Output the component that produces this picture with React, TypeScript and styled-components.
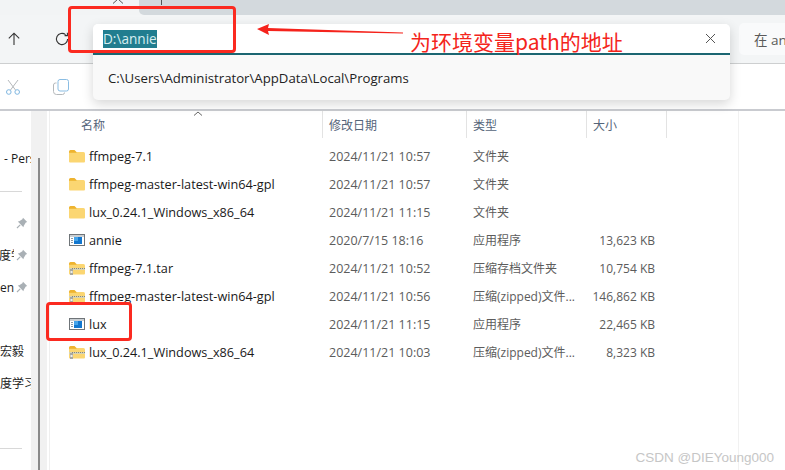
import React from 'react';
import styled, { createGlobalStyle } from 'styled-components';

const GlobalStyle = createGlobalStyle`
  html, body { margin: 0; padding: 0; background: #fff; }
  * { box-sizing: border-box; }
`;

const UI_FONT = `"Open Sans", "Noto Sans CJK SC", sans-serif`;

type FileKind = 'folder' | 'app' | 'zip';

interface FileEntry {
  name: string;
  date: string;
  type: string;
  size?: string;
  kind: FileKind;
}

const files: FileEntry[] = [
  { name: 'ffmpeg-7.1', date: '2024/11/21 10:57', type: '文件夹', kind: 'folder' },
  { name: 'ffmpeg-master-latest-win64-gpl', date: '2024/11/21 10:57', type: '文件夹', kind: 'folder' },
  { name: 'lux_0.24.1_Windows_x86_64', date: '2024/11/21 11:15', type: '文件夹', kind: 'folder' },
  { name: 'annie', date: '2020/7/15 18:16', type: '应用程序', size: '13,623 KB', kind: 'app' },
  { name: 'ffmpeg-7.1.tar', date: '2024/11/21 10:52', type: '压缩存档文件夹', size: '10,754 KB', kind: 'zip' },
  { name: 'ffmpeg-master-latest-win64-gpl', date: '2024/11/21 10:56', type: '压缩(zipped)文件...', size: '146,862 KB', kind: 'zip' },
  { name: 'lux', date: '2024/11/21 11:15', type: '应用程序', size: '22,465 KB', kind: 'app' },
  { name: 'lux_0.24.1_Windows_x86_64', date: '2024/11/21 10:03', type: '压缩(zipped)文件...', size: '8,323 KB', kind: 'zip' },
];

const FileIcon = ({ kind }: { kind: FileKind }) => {
  if (kind === 'app') {
    return (
      <svg width="16" height="14" viewBox="0 0 16 14">
        <rect x="0.5" y="1.5" width="15" height="11" fill="#fff" stroke="#6f7478" />
        <rect x="1" y="2" width="14" height="2" fill="#c9ced2" />
        <rect x="5" y="4" width="8" height="7" fill="#1277cf" />
        <rect x="5" y="4" width="4" height="4" fill="#45a4ea" />
        <rect x="2" y="5" width="2" height="1" fill="#8a9aa6" />
        <rect x="2" y="7" width="2" height="1" fill="#8a9aa6" />
        <rect x="2" y="9" width="2" height="1" fill="#8a9aa6" />
      </svg>
    );
  }
  return (
    <svg width="16" height="16" viewBox="0 0 16 16">
      <path d="M0 3.5 A1.5 1.5 0 0 1 1.5 2 H5.5 L7.5 4 H0 Z" fill="#eeb32f" />
      <path d="M0 4 H14.5 A1.5 1.5 0 0 1 16 5.5 V13.5 A1 1 0 0 1 15 14.5 H1 A1 1 0 0 1 0 13.5 Z" fill="#fbd672" />
      <path d="M0 5 L7 5 L8 4 H0 Z" fill="#f0bb3c" />
      {kind === 'zip' && (
        <>
          <rect x="0" y="8" width="16" height="2" fill="#d6d3b4" />
          <path d="M3 8.5 H16" stroke="#85877e" strokeDasharray="1 1" />
          <rect x="1" y="9" width="3" height="6" fill="#a8a8a0" />
          <rect x="1.5" y="11" width="2" height="2" fill="#efefe8" />
        </>
      )}
    </svg>
  );
};

const Page = styled.div`
  position: relative;
  display: flex;
  flex-direction: column;
  width: 785px;
  height: 470px;
  overflow: hidden;
  background: #fff;
  font-family: ${UI_FONT};
`;

const TabStrip = styled.div`
  display: flex;
  height: 15px;
  background: #f2f4f5;
`;

const TabEdge = styled.div`
  width: 139px;
  display: flex;
  justify-content: flex-end;
  padding-right: 15px;
`;

const TabRest = styled.div`
  flex: 1;
  background: #d3d9dd;
  border-bottom-left-radius: 5px;
  padding-left: 22px;
`;

const TabTick = styled.div`
  width: 1px;
  height: 5px;
  background: #55585a;
`;

const NavBar = styled.div`
  display: flex;
  align-items: center;
  flex: none;
  height: 49px;
  padding: 0 0 0 5px;
  background: #f3f5f6;
  border-bottom: 1px solid #cdcfd0;
`;

const NavButton = styled.div`
  display: flex;
  align-items: center;
  justify-content: center;
  flex: none;
  width: 18px;
  height: 18px;
  margin-right: 30px;
  color: #3a3a3a;
`;

const AddressSlot = styled.div`
  position: relative;
  flex: none;
  width: 637px;
  height: 31px;
  margin-left: -8px;
  margin-top: 1px;
`;

const AddressPopup = styled.div`
  position: absolute;
  top: 0;
  left: 0;
  right: 0;
  height: 76px;
  border-radius: 5px;
  background: #f9f9f9;
  box-shadow: 0 4px 12px rgba(0, 0, 0, 0.16);
  z-index: 2;
`;

const AddressInput = styled.div`
  display: flex;
  align-items: center;
  justify-content: space-between;
  height: 31px;
  padding: 0 14px 0 10px;
  background: #fff;
  border-bottom: 2px solid #1c6672;
  border-radius: 5px 5px 0 0;
  font-size: 13.6px;
`;

const Selected = styled.span`
  display: inline-block;
  height: 18px;
  line-height: 18px;
  background: #217d8f;
  color: #d6edf0;
  white-space: nowrap;
`;

const Suggestion = styled.div`
  padding: 14px 0 0 15px;
  font-size: 13.2px;
  color: #222;
  white-space: nowrap;
`;

const SearchBox = styled.div`
  display: flex;
  align-items: center;
  flex: none;
  width: 60px;
  height: 32px;
  margin-left: 9px;
  padding-left: 15px;
  border-radius: 5px;
  background: #f9fafb;
  font-size: 13.5px;
  color: #5a5a5a;
  white-space: nowrap;
`;

const CommandBar = styled.div`
  display: flex;
  align-items: center;
  flex: none;
  height: 47px;
  padding: 1px 0 0 5px;
  background: #fff;
  border-bottom: 2px solid #c9cbd0;
`;

const CommandButton = styled.div`
  display: flex;
  width: 16px;
  height: 16px;
  margin-right: 32px;
`;

const Body = styled.div`
  display: flex;
  flex: 1;
  min-height: 0;
`;

const Sidebar = styled.div`
  display: flex;
  flex-direction: column;
  flex: none;
  width: 31px;
  overflow: hidden;
  padding-top: 31px;
  font-size: 12px;
  color: #1c1c1c;
`;

const SideRow = styled.div<{ $pinned?: boolean; $indent?: number; $tall?: boolean }>`
  display: flex;
  align-items: center;
  justify-content: ${(p) => (p.$pinned ? 'flex-end' : 'flex-start')};
  flex: none;
  height: ${(p) => (p.$tall ? 33 : 32)}px;
  padding-left: ${(p) => p.$indent ?? 0}px;
  white-space: nowrap;
`;

const ClippedLabel = styled.span`
  flex: none;
  width: 15px;
  overflow: hidden;
`;

const SideRule = styled.div`
  width: 22px;
  height: 1px;
  margin-top: 2px;
  background: #d8d8d8;
`;

const PinIcon = styled.svg`
  flex: none;
  width: 12px;
  height: 12px;
  margin: 0 3px 0 2px;
`;

const Gutter = styled.div`
  display: flex;
  flex: none;
  width: 16px;
  padding: 47px 0 0 7px;
  background: #f1f1f1;
`;

const ScrollThumb = styled.div`
  width: 2px;
  background: #8a8a8a;
`;

const FileList = styled.div`
  position: relative;
  flex: 1;
  min-width: 0;
  margin-left: 2px;
  border-left: 1px solid #efefef;

  &::after {
    content: '';
    position: absolute;
    top: 0;
    bottom: 0;
    left: 688px;
    width: 1px;
    background: #f1f1f1;
  }
`;

const COLUMNS = '273px 144px 120px 80px 72px';

const HeaderRow = styled.div`
  position: relative;
  display: grid;
  grid-template-columns: ${COLUMNS};
  height: 27px;
  margin-bottom: 4px;
`;

const HeaderCell = styled.div<{ $inset?: number; $bare?: boolean }>`
  display: flex;
  align-items: center;
  padding-left: ${(p) => p.$inset ?? 6}px;
  border-right: 1px solid ${(p) => (p.$bare ? 'transparent' : '#e3e3e3')};
  font-size: 12px;
  color: #55657a;
`;

const SortMark = styled.svg`
  position: absolute;
  left: 143px;
  top: 0;
`;

const Row = styled.div`
  display: grid;
  grid-template-columns: ${COLUMNS};
  align-items: center;
  height: 28px;
  font-size: 12px;
  color: #5c5c5c;
  white-space: nowrap;
`;

const NameCell = styled.div`
  display: flex;
  align-items: center;
  gap: 4px;
  padding-left: 19px;
  font-size: 12.7px;
  color: #1a1a1a;
`;

const TextCell = styled.div<{ $size?: number }>`
  padding-left: 6px;
  overflow: hidden;
  font-size: ${(p) => p.$size ?? 12}px;
`;

const SizeCell = styled.div`
  padding-right: 12px;
  text-align: right;
`;

const RedFrame = styled.div<{ $left: number; $top: number; $w: number; $h: number }>`
  position: absolute;
  left: ${(p) => p.$left}px;
  top: ${(p) => p.$top}px;
  width: ${(p) => p.$w}px;
  height: ${(p) => p.$h}px;
  border: 3px solid #fb2a20;
  border-radius: 4px;
  z-index: 3;
`;

const ArrowMark = styled.svg`
  position: absolute;
  left: 255px;
  top: 22px;
  z-index: 3;
`;

const Annotation = styled.div`
  position: absolute;
  left: 410px;
  top: 26px;
  font-family: "Noto Sans CJK SC", sans-serif;
  font-size: 21px;
  line-height: 30px;
  color: #f4251c;
  white-space: nowrap;
  z-index: 3;
`;

const Watermark = styled.div`
  position: absolute;
  right: 11px;
  bottom: 5px;
  font-family: "Liberation Sans", sans-serif;
  font-size: 13.5px;
  color: #c6c6c6;
  z-index: 3;
`;

const Pin = () => (
  <PinIcon viewBox="0 0 12 12">
    <path d="M7 0.8 L11.2 5 L9.8 5.6 L7.8 8.8 L7.4 10.2 L1.8 4.6 L3.2 4.2 L6.4 2.2 Z" fill="#a9b0b5" />
    <path d="M4.2 7.8 L1 11" stroke="#a9b0b5" strokeWidth="1.2" />
  </PinIcon>
);

export default function App() {
  return (
    <Page>
      <GlobalStyle />
      <TabStrip>
        <TabEdge>
          <svg width="12" height="5" viewBox="0 0 12 5">
            <path d="M1 4.5 L6 0 L11 4.5" transform="translate(0 -1)" fill="none" stroke="#55585a" />
          </svg>
        </TabEdge>
        <TabRest>
          <TabTick />
        </TabRest>
      </TabStrip>

      <NavBar>
        <NavButton>
          <svg width="14" height="14" viewBox="0 0 14 14" fill="none" stroke="#333" strokeWidth="1.1">
            <path d="M7 13 V1.2 M1.8 6.4 L7 1.2 L12.2 6.4" />
          </svg>
        </NavButton>
        <NavButton>
          <svg width="14" height="14" viewBox="0 0 14 14" fill="none" stroke="#333" strokeWidth="1.1">
            <path d="M12.6 7 A5.6 5.6 0 1 1 10.6 2.7 M12.4 0.8 V3.6 H9.6" />
          </svg>
        </NavButton>
        <AddressSlot>
          <AddressPopup>
            <AddressInput>
              <Selected>D:\annie</Selected>
              <svg width="11" height="11" viewBox="0 0 11 11" stroke="#555" strokeWidth="1">
                <path d="M1 1 L10 10 M10 1 L1 10" />
              </svg>
            </AddressInput>
            <Suggestion>C:\Users\Administrator\AppData\Local\Programs</Suggestion>
          </AddressPopup>
        </AddressSlot>
        <SearchBox>在 annie</SearchBox>
      </NavBar>

      <CommandBar>
        <CommandButton>
          <svg width="16" height="16" viewBox="0 0 16 16" fill="none" strokeWidth="1">
            <path d="M3 1 L10.5 11 M13 1 L5.5 11" stroke="#b4b8bb" />
            <circle cx="3.8" cy="13" r="2.3" stroke="#7fb6e0" />
            <circle cx="12.2" cy="13" r="2.3" stroke="#7fb6e0" />
          </svg>
        </CommandButton>
        <CommandButton>
          <svg width="16" height="16" viewBox="0 0 16 16" fill="none" strokeWidth="1">
            <path d="M3.5 4 H2.5 A2 2 0 0 0 0.5 6 V12.5 A3 3 0 0 0 3.5 15.5 H9.5 A2 2 0 0 0 11.5 13.5" stroke="#b4b8bb" />
            <rect x="5" y="0.5" width="10.5" height="11.5" rx="2" stroke="#8abde3" />
          </svg>
        </CommandButton>
      </CommandBar>

      <Body>
        <Sidebar>
          <SideRow $indent={4}>- Personal</SideRow>
          <SideRow $tall><SideRule /></SideRow>
          <SideRow $pinned><Pin /></SideRow>
          <SideRow $pinned><ClippedLabel>度学</ClippedLabel><Pin /></SideRow>
          <SideRow $pinned>Golden<Pin /></SideRow>
          <SideRow />
          <SideRow $indent={-2}>宏毅</SideRow>
          <SideRow $indent={-2}>度学习笔记</SideRow>
          <SideRow />
          <SideRow><SideRule /></SideRow>
        </Sidebar>
        <Gutter>
          <ScrollThumb />
        </Gutter>
        <FileList>
          <HeaderRow>
            <HeaderCell $inset={31}>名称</HeaderCell>
            <HeaderCell>修改日期</HeaderCell>
            <HeaderCell>类型</HeaderCell>
            <HeaderCell>大小</HeaderCell>
            <HeaderCell $bare />
            <SortMark width="10" height="5" viewBox="0 0 10 5">
              <path d="M1 4.5 L5 1 L9 4.5" fill="none" stroke="#666" />
            </SortMark>
          </HeaderRow>
          {files.map((file, i) => (
            <Row key={i}>
              <NameCell>
                <FileIcon kind={file.kind} />
                {file.name}
              </NameCell>
              <TextCell $size={12.5}>{file.date}</TextCell>
              <TextCell>{file.type}</TextCell>
              <SizeCell>{file.size}</SizeCell>
            </Row>
          ))}
        </FileList>
      </Body>

      <RedFrame $left={68} $top={6} $w={168} $h={47} />
      <RedFrame $left={46} $top={302} $w={86} $h={39} />
      <ArrowMark width="150" height="16" viewBox="0 0 150 16">
        <path d="M2 7 L14 2 L13 6 L148 10.5 L148 11.5 L13 9 L14 13 Z" fill="#f5231c" />
      </ArrowMark>
      <Annotation>为环境变量path的地址</Annotation>
      <Watermark>CSDN @DIEYoung000</Watermark>
    </Page>
  );
}
